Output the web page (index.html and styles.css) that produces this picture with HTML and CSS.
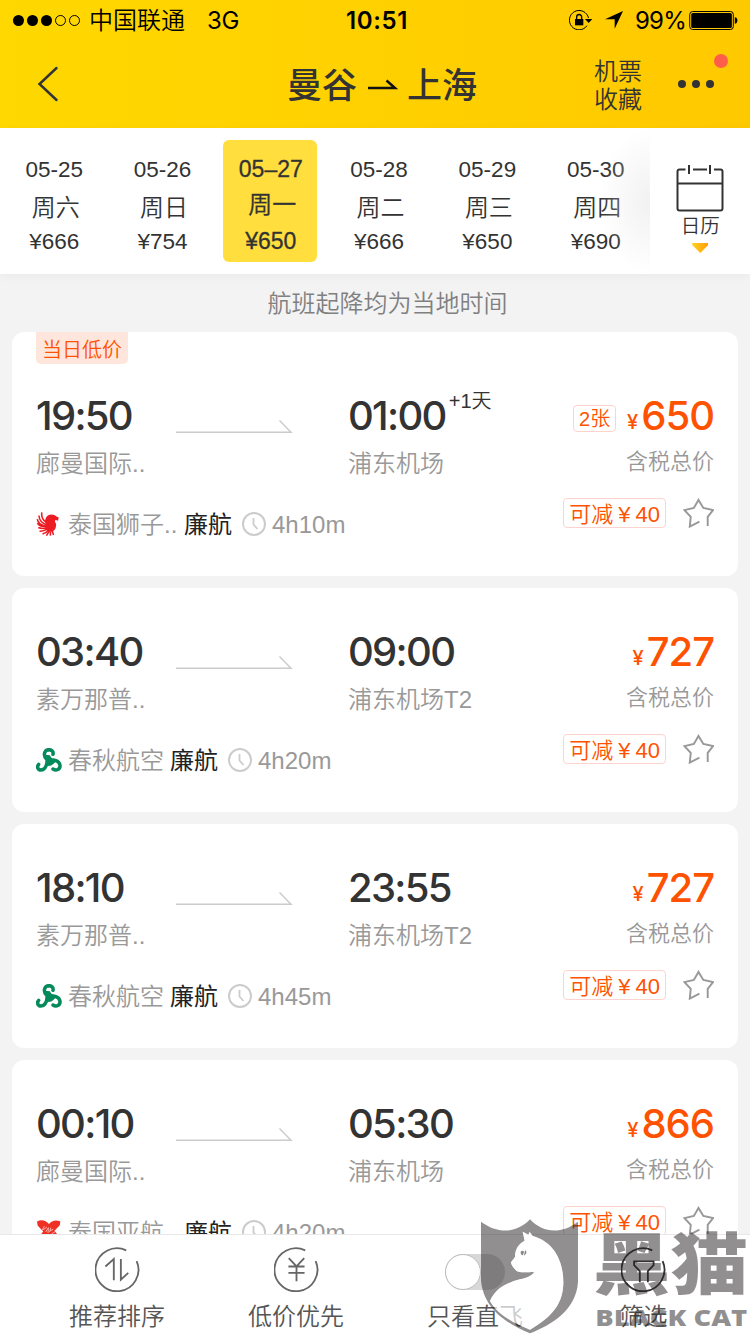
FILE: index.html
```
<!DOCTYPE html>
<html lang="zh-CN">
<head>
    <meta charset="UTF-8">
    <meta name="viewport" content="width=device-width, initial-scale=1.0">
    <title>曼谷 - 上海 机票</title>
    <link rel="stylesheet" href="styles.css">
</head>
<body>
    <!-- shared icons -->
    <svg class="defs" width="0" height="0">
        <symbol id="arrow" viewBox="0 0 118 16">
            <path d="M0 14.2H115L103.5 2.500" fill="none" stroke="#ccc" stroke-width="1.5"/>
        </symbol>
        <symbol id="clock" viewBox="0 0 24 24">
            <circle cx="12" cy="12" r="11" fill="none" stroke="#ccc" stroke-width="2"/>
            <path d="M11.5 6V12.5L15.5 17" fill="none" stroke="#ccc" stroke-width="1.8"/>
        </symbol>
        <symbol id="star" viewBox="0 0 32 32">
            <path d="M25.500 29V19.500L31 12.5L21 10.3L16 2L11.2 10.3L1.5 12.5L8 19.5L7 29.500L17 24.5" fill="none" stroke="#999" stroke-width="2"/>
        </symbol>
        <symbol id="spring" viewBox="0 0 78 72">
            <path d="M32 34C20 22 25 6 38 5C47 5 53 11 51 19M34 38C32 54 26 66 15 66C5 66 2 56 8 49M40 40C52 32 70 38 72 52C73 64 61 70 51 63" fill="none" stroke="#048a5b" stroke-width="10.500" stroke-linecap="round"/>
            <path d="M26 20L42 22Q44 32 62 38L52 48Q46 54 38 54L30 50Q28 40 30 34Z" fill="#048a5b"/>
        </symbol>
        <symbol id="lion" viewBox="0 0 68 74">
            <path d="M28 17C34 5 53 5 60 14L67 17L65 27L58 25C54 27 55 31 59 36C60 53 51 62 39 61C28 58 24 48 29 38L24 28Z" fill="#ed1c24"/>
            <path d="M15 1C13 13 18 26 32 34M6 11C7 25 17 36 31 39M1 22C3 36 16 42 29 43M1 35C9 45 18 46 29 46M4 48C13 52 22 51 31 49M8 59C18 60 25 57 34 52M17 68C26 66 32 61 37 55M29 73L38 59M41 73L42 60M51 71L47 58" fill="none" stroke="#ed1c24" stroke-width="4.800"/>
        </symbol>
        <symbol id="airasia" viewBox="0 0 78 78">
            <path d="M0 5C14 -3 29 1 39 13C48 1 63 -2 76 5L74 17L57 35L76 60L63 76L39 53L15 76L2 61L20 37L2 18Z" fill="#ee3124"/>
            <path d="M14 37L24 20M20 32L32 23M28 39L37 25L36 42M45 25L41 39M43 35L53 30M48 45L60 37" fill="none" stroke="#fff" stroke-width="2"/>
        </symbol>
    </svg>

    <div class="app">
        <header class="header">
            <div class="status">
                <div class="signal">
                    <i></i><i></i><i></i><i class="off"></i><i class="off"></i>
                </div>
                <span class="carrier">中国联通</span>
                <span class="network">3G</span>
                <span class="clock">10:51</span>
                <svg class="lock" viewBox="0 0 72 60">
                    <path d="M54 47A29 29 0 1 1 58.500 24" fill="none" stroke="#000" stroke-width="3"/>
                    <path d="M48 27H70L59 39Z"/>
                    <path d="M18 27H43V46H18Z"/>
                    <path d="M23 28V21A7.500 7.500 0 0 1 38 21V28" fill="none" stroke="#000" stroke-width="4"/>
                </svg>
                <svg class="locate" viewBox="0 0 54 54"><path d="M54 0L29 53V25H0Z"/></svg>
                <span class="percent">99%</span>
                <svg class="battery" viewBox="0 0 148 58">
                    <rect x="1.500" y="1.500" width="133" height="55" rx="9" fill="none" stroke="#000" stroke-width="3"/>
                    <rect x="6" y="6" width="124" height="46" rx="5"/>
                    <path d="M139 19Q147 20 147 29Q147 38 139 39Z"/>
                </svg>
            </div>
            <div class="nav">
                <svg class="back" viewBox="0 0 22 36"><path d="M19.500 2L2.500 18L19.500 34" fill="none" stroke="#333" stroke-width="2.500" stroke-linecap="round"/></svg>
                <div class="title">
                    <span>曼谷</span>
                    <svg class="title-arrow" viewBox="0 0 30 14"><path d="M0 11H27L18.500 3.500" fill="none" stroke="#111" stroke-width="2.500"/></svg>
                    <span>上海</span>
                </div>
                <div class="fav">机票<br>收藏</div>
                <div class="more"><i></i><i></i><i></i><b class="dot"></b></div>
            </div>
        </header>

        <div class="dates">
            <div class="date"><span>05-25</span><span class="week">周六</span><span>¥666</span></div>
            <div class="date"><span>05-26</span><span class="week">周日</span><span>¥754</span></div>
            <div class="date active"><span>05–27</span><span class="week">周一</span><span>¥650</span></div>
            <div class="date"><span>05-28</span><span class="week">周二</span><span>¥666</span></div>
            <div class="date"><span>05-29</span><span class="week">周三</span><span>¥650</span></div>
            <div class="date"><span>05-30</span><span class="week">周四</span><span>¥690</span></div>
            <div class="calendar">
                <svg class="calendar-icon" viewBox="0 0 48 48">
                    <path d="M9.500 5.500H3.500Q1.500 5.500 1.500 7.500V44.500Q1.500 46.500 3.500 46.500H44.500Q46.500 46.500 46.500 44.500V7.500Q46.500 5.500 44.500 5.500H38M17 5.500H31M13 1V10M34 1V10M2 19.500H46" fill="none" stroke="#333" stroke-width="2"/>
                </svg>
                <span>日历</span>
                <i class="triangle"></i>
            </div>
            <div class="fade"></div>
        </div>

        <div class="notice">航班起降均为当地时间</div>

        <div class="list">
            <div class="card">
                <div class="low-tag">当日低价</div>
                <div class="card-body">
                    <div class="info">
                        <div class="times">
                            <span class="time">19:50</span>
                            <svg class="arrow"><use href="#arrow"/></svg>
                            <span class="time">01:00</span><sup class="plus">+1天</sup>
                        </div>
                        <div class="airports"><span>廊曼国际..</span><span>浦东机场</span></div>
                        <div class="airline">
                            <svg class="logo lion"><use href="#lion"/></svg>
                            <span class="name wide">泰国狮子..</span>
                            <span class="budget">廉航</span>
                            <svg class="clock-icon"><use href="#clock"/></svg>
                            <span class="duration">4h10m</span>
                        </div>
                    </div>
                    <div class="side">
                        <div class="price"><span class="left">2张</span><small>¥</small>650</div>
                        <div class="tax">含税总价</div>
                        <div class="actions"><span class="coupon">可减<em>¥</em>40</span><svg class="star"><use href="#star"/></svg></div>
                    </div>
                </div>
            </div>

            <div class="card">
                <div class="card-body">
                    <div class="info">
                        <div class="times">
                            <span class="time">03:40</span>
                            <svg class="arrow"><use href="#arrow"/></svg>
                            <span class="time">09:00</span>
                        </div>
                        <div class="airports"><span>素万那普..</span><span>浦东机场T2</span></div>
                        <div class="airline">
                            <svg class="logo"><use href="#spring"/></svg>
                            <span class="name">春秋航空</span>
                            <span class="budget">廉航</span>
                            <svg class="clock-icon"><use href="#clock"/></svg>
                            <span class="duration">4h20m</span>
                        </div>
                    </div>
                    <div class="side">
                        <div class="price"><small>¥</small>727</div>
                        <div class="tax">含税总价</div>
                        <div class="actions"><span class="coupon">可减<em>¥</em>40</span><svg class="star"><use href="#star"/></svg></div>
                    </div>
                </div>
            </div>

            <div class="card">
                <div class="card-body">
                    <div class="info">
                        <div class="times">
                            <span class="time">18:10</span>
                            <svg class="arrow"><use href="#arrow"/></svg>
                            <span class="time">23:55</span>
                        </div>
                        <div class="airports"><span>素万那普..</span><span>浦东机场T2</span></div>
                        <div class="airline">
                            <svg class="logo"><use href="#spring"/></svg>
                            <span class="name">春秋航空</span>
                            <span class="budget">廉航</span>
                            <svg class="clock-icon"><use href="#clock"/></svg>
                            <span class="duration">4h45m</span>
                        </div>
                    </div>
                    <div class="side">
                        <div class="price"><small>¥</small>727</div>
                        <div class="tax">含税总价</div>
                        <div class="actions"><span class="coupon">可减<em>¥</em>40</span><svg class="star"><use href="#star"/></svg></div>
                    </div>
                </div>
            </div>

            <div class="card">
                <div class="card-body">
                    <div class="info">
                        <div class="times">
                            <span class="time">00:10</span>
                            <svg class="arrow"><use href="#arrow"/></svg>
                            <span class="time">05:30</span>
                        </div>
                        <div class="airports"><span>廊曼国际..</span><span>浦东机场</span></div>
                        <div class="airline">
                            <svg class="logo"><use href="#airasia"/></svg>
                            <span class="name wide">泰国亚航</span>
                            <span class="budget">廉航</span>
                            <svg class="clock-icon"><use href="#clock"/></svg>
                            <span class="duration">4h20m</span>
                        </div>
                    </div>
                    <div class="side">
                        <div class="price"><small>¥</small>866</div>
                        <div class="tax">含税总价</div>
                        <div class="actions"><span class="coupon">可减<em>¥</em>40</span><svg class="star"><use href="#star"/></svg></div>
                    </div>
                </div>
            </div>
        </div>

        <footer class="tabs">
            <div class="tab">
                <svg class="tab-icon" viewBox="0 0 134 134">
                    <path d="M93 10A64 64 0 1 0 124 42M31 58L56 36V99M77 36V97L99 77" fill="none" stroke="#666" stroke-width="5.500"/>
                </svg>
                <span>推荐排序</span>
            </div>
            <div class="tab">
                <svg class="tab-icon" viewBox="0 0 134 134">
                    <path d="M93 10A64 64 0 1 0 124 42M44 33L67 58L90 33M43 58H91M43 77H91M67 58V102" fill="none" stroke="#666" stroke-width="5.500"/>
                </svg>
                <span>低价优先</span>
            </div>
            <div class="tab">
                <div class="switch"><i></i></div>
                <span>只看直飞</span>
            </div>
            <div class="tab last">
                <svg class="tab-icon" viewBox="0 0 134 134">
                    <path d="M93 10A64 64 0 1 0 124 42M56 105V72L39 54V43H97V54L80 72V105" fill="none" stroke="#333" stroke-width="5.500"/>
                </svg>
                <span>筛选</span>
            </div>
        </footer>

        <svg class="watermark" viewBox="300 0 825 402">
            <g fill="#231f20" fill-opacity=".5">
                <path fill-rule="evenodd" d="M318 65C368 102 425 101 465 58C505 101 560 102 609 65V245C604 330 530 374 465 400C399 374 324 326 318 240ZM443 95L460 104L464 96L473 108C535 125 565 180 565 247C565 310 532 351 465 389C417 371 366 342 345 303C363 263 397 248 435 238C458 232 470 228 478 215C455 217 432 218 425 213C416 205 408 195 408 187L420 171C420 147 431 131 449 122Z"/>
                <text class="mark-cn" transform="translate(653 267) scale(1.010 .89)" textLength="462" lengthAdjust="spacingAndGlyphs">黑猫</text>
                <text class="mark-en" x="661" y="378" textLength="456" lengthAdjust="spacingAndGlyphs">BLACK CAT</text>
            </g>
            <path d="M443 95L460 104L464 96L473 108C535 125 565 180 565 247C565 310 532 351 465 389C417 371 366 342 345 303C363 263 397 248 435 238C458 232 470 228 478 215C455 217 432 218 425 213C416 205 408 195 408 187L420 171C420 147 431 131 449 122Z" fill="#fff" fill-opacity=".7"/>
            <path d="M437 155C441 151 445 152 447 155L444 166C439 165 436 160 437 155ZM450 151C457 154 455 162 447 167Z" fill="#888"/>
        </svg>
    </div>
</body>
</html>
```
FILE: styles.css
```
* {
    box-sizing: border-box;
}
body {
    margin: 0;
    background: #f3f3f3;
    font-family: "Liberation Sans", "Noto Sans CJK SC", sans-serif;
    font-weight: 350;
    color: #333;
    white-space: nowrap;
}
i, em {
    font-style: normal;
}
svg {
    display: block;
    flex: none;
}
.defs {
    position: absolute;
}
.app {
    position: relative;
    width: 750px;
    height: 1334px;
    overflow: hidden;
    display: flex;
    flex-direction: column;
}

/* header */
.header {
    flex: none;
    height: 128px;
    background: linear-gradient(90deg, #ffd800, #ffc900);
}
.status {
    display: flex;
    align-items: center;
    height: 40px;
    padding: 0 11px 0 13px;
    color: #000;
    font-family: Inter, "Noto Sans CJK SC", sans-serif;
    font-size: 24px;
    font-weight: 400;
    line-height: 42px;
}
.signal {
    display: flex;
    gap: 3px;
    width: 76px;
}
.signal i {
    width: 11px;
    height: 11px;
    border-radius: 50%;
    background: #000;
}
.signal .off {
    background: none;
    border: 1px solid #000;
}
.carrier {
    width: 118px;
    padding-top: 2px;
    font-weight: 350;
}
.network {
    width: 139px;
    padding-top: 2px;
    letter-spacing: -0.3px;
}
.clock {
    width: 223px;
    padding-top: 2px;
    font-weight: 600;
    letter-spacing: 0.6px;
}
.lock {
    width: 24px;
    height: 20px;
}
.locate {
    width: 18px;
    height: 18px;
    margin-left: 12px;
}
.percent {
    width: 54px;
    margin-left: 12px;
    padding-top: 2px;
    letter-spacing: -0.8px;
}
.battery {
    width: 49px;
    height: 19px;
}
.nav {
    display: flex;
    align-items: center;
    height: 88px;
    padding-left: 37px;
}
.back {
    width: 22px;
    height: 36px;
}
.title {
    display: flex;
    align-items: center;
    width: 307px;
    margin-left: 228px;
    font-size: 35px;
    font-weight: 500;
    line-height: 44px;
}
.title span {
    padding-top: 3px;
}
.title-arrow {
    width: 30px;
    height: 14px;
    margin: 0 9px 0 11px;
}
.fav {
    width: 84px;
    padding-top: 3px;
    font-size: 24px;
    line-height: 28px;
}
.more {
    position: relative;
    display: flex;
    gap: 6px;
}
.more i {
    width: 8px;
    height: 8px;
    border-radius: 50%;
    background: #333;
}
.dot {
    position: absolute;
    left: 36px;
    top: -26px;
    width: 14px;
    height: 14px;
    border-radius: 50%;
    background: #ff5f4a;
}

/* date bar */
.dates {
    position: relative;
    display: flex;
    flex: none;
    height: 146px;
    background: #fff;
    box-shadow: 0 2px 10px rgba(0, 0, 0, 0.04);
}
.date {
    flex: none;
    width: 94px;
    height: 122px;
    margin: 12px 14.300px 0 0;
    padding: 12px 0 0 1px;
    text-align: center;
    font-size: 22.500px;
}
.date:first-child {
    margin-left: 6.700px;
}
.date span {
    display: block;
    height: 36px;
    line-height: 36px;
}
.date .week {
    padding-left: 3px;
    font-size: 24px;
    line-height: 39px;
}
.date.active {
    padding-top: 11px;
    border-radius: 6px;
    background: #ffde3d;
    font-size: 23px;
    -webkit-text-stroke: 0.3px #333;
}
.date.active .week {
    line-height: 36px;
}
.calendar {
    display: flex;
    flex-direction: column;
    align-items: center;
    width: 100px;
    padding-top: 36px;
    margin-left: -6px;
    background: #fff;
    z-index: 2;
    font-size: 19.500px;
    line-height: 29px;
}
.calendar-icon {
    width: 48px;
    height: 48px;
}
.triangle {
    width: 16px;
    height: 10px;
    margin-top: 2px;
    background: linear-gradient(90deg, #ffd21f, #ff9d0a);
    clip-path: polygon(0 0, 100% 0, 100% 20%, 50% 100%, 0 20%);
}
.fade {
    position: absolute;
    left: 600px;
    top: 0;
    width: 50px;
    height: 146px;
    background: radial-gradient(ellipse 100% 50% at 100% 50%, rgba(232, 232, 232, 0.6), rgba(255, 255, 255, 0));
}
.notice {
    flex: none;
    height: 58px;
    padding-left: 25px;
    line-height: 60px;
    text-align: center;
    font-size: 24px;
    color: #808080;
}

/* flights */
.list {
    display: flex;
    flex-direction: column;
    flex: 1;
    gap: 12px;
    min-height: 0;
    padding: 0 12px;
    overflow: hidden;
}
.card {
    flex: none;
    min-height: 224px;
    padding: 0 24px;
    border-radius: 12px;
    background: #fff;
}
.low-tag {
    width: 92px;
    height: 32px;
    margin-bottom: -12px;
    line-height: 36px;
    text-align: center;
    border-radius: 0 0 5px 5px;
    background: #ffe6dc;
    color: #ff5200;
    font-size: 20px;
}
.card-body {
    display: flex;
    justify-content: space-between;
    height: 224px;
    padding-top: 40px;
}
.times {
    display: flex;
    align-items: center;
    height: 46px;
}
.time {
    font-family: Inter, sans-serif;
    font-size: 40px;
    font-weight: 450;
    letter-spacing: -1.700px;
}
.time:first-child {
    width: 140px;
}
.arrow {
    width: 118px;
    height: 16px;
    margin: 22px 54px 0 0;
}
.plus {
    align-self: flex-start;
    margin-left: 3px;
    line-height: 19px;
    font-size: 20px;
}
.airports {
    display: flex;
    height: 50px;
    line-height: 51px;
    font-size: 24px;
    color: #999;
}
.airports span:first-child {
    width: 312px;
}
.airline {
    display: flex;
    align-items: center;
    height: 74px;
    line-height: 38px;
    font-size: 24px;
    color: #999;
}
.logo {
    width: 26px;
    height: 24px;
    margin-bottom: 2px;
}
.logo.lion {
    width: 24px;
}
.name {
    width: 96px;
    margin: 0 6px;
}
.name.wide {
    width: 110px;
}
.lion + .name {
    margin-left: 8px;
}
.budget {
    color: #222;
    font-weight: 400;
    margin-right: 10px;
}
.clock-icon {
    width: 24px;
    height: 24px;
    margin-bottom: 2px;
}
.duration {
    margin-left: 6px;
}
.side {
    display: flex;
    flex-direction: column;
    align-items: flex-end;
    color: #ff5200;
}
.price {
    display: flex;
    align-items: center;
    height: 46px;
    font-family: Inter, sans-serif;
    font-size: 40px;
    font-weight: 500;
    letter-spacing: -1px;
}
.price small {
    margin: 13px 4px 0 0;
    font-size: 20px;
}
.left {
    width: 43px;
    height: 27px;
    margin: 6px 11px 0 0;
    line-height: 27px;
    text-align: center;
    border: 1px solid #ffd3cd;
    border-radius: 4px;
    font-family: "Liberation Sans", "Noto Sans CJK SC", sans-serif;
    font-size: 20px;
    font-weight: 350;
    letter-spacing: 0;
}
.tax {
    height: 60px;
    line-height: 48px;
    color: #999;
    font-size: 22px;
}
.actions {
    display: flex;
    align-items: center;
    gap: 17px;
    height: 30px;
}
.coupon {
    width: 103px;
    height: 30px;
    line-height: 31px;
    text-align: center;
    border: 1px solid #ffd3cd;
    border-radius: 4px;
    font-size: 22px;
}
.coupon em {
    margin: 0 5px;
}
.star {
    width: 31px;
    height: 31px;
    margin-top: 1px;
}

/* bottom bar */
.tabs {
    display: flex;
    flex: none;
    height: 100px;
    padding-left: 27.500px;
    border-top: 1px solid #e8e8e8;
    background: #fff;
}
.tab {
    display: flex;
    flex-direction: column;
    align-items: center;
    width: 179px;
    padding-top: 12px;
    font-size: 24px;
    line-height: 39px;
    color: #555;
}
.tab.last {
    width: 158px;
}
.tab-icon {
    width: 45px;
    height: 45px;
    margin-bottom: 5px;
}
.switch {
    width: 60px;
    height: 36px;
    margin: 7px 0 7px;
    border-radius: 18px;
    background: #d8d8d8;
}
.switch i {
    display: block;
    width: 36px;
    height: 36px;
    border: 1px solid #bbb;
    border-radius: 50%;
    background: #fff;
}

.watermark {
    position: absolute;
    right: 0;
    bottom: 0;
    width: 275px;
    height: 134px;
}
.mark-cn {
    font-family: "Noto Sans CJK SC", sans-serif;
    font-size: 228px;
    font-weight: 900;
}
.mark-en {
    font-family: "Open Sans", sans-serif;
    font-size: 66px;
    font-weight: 800;
}
```
